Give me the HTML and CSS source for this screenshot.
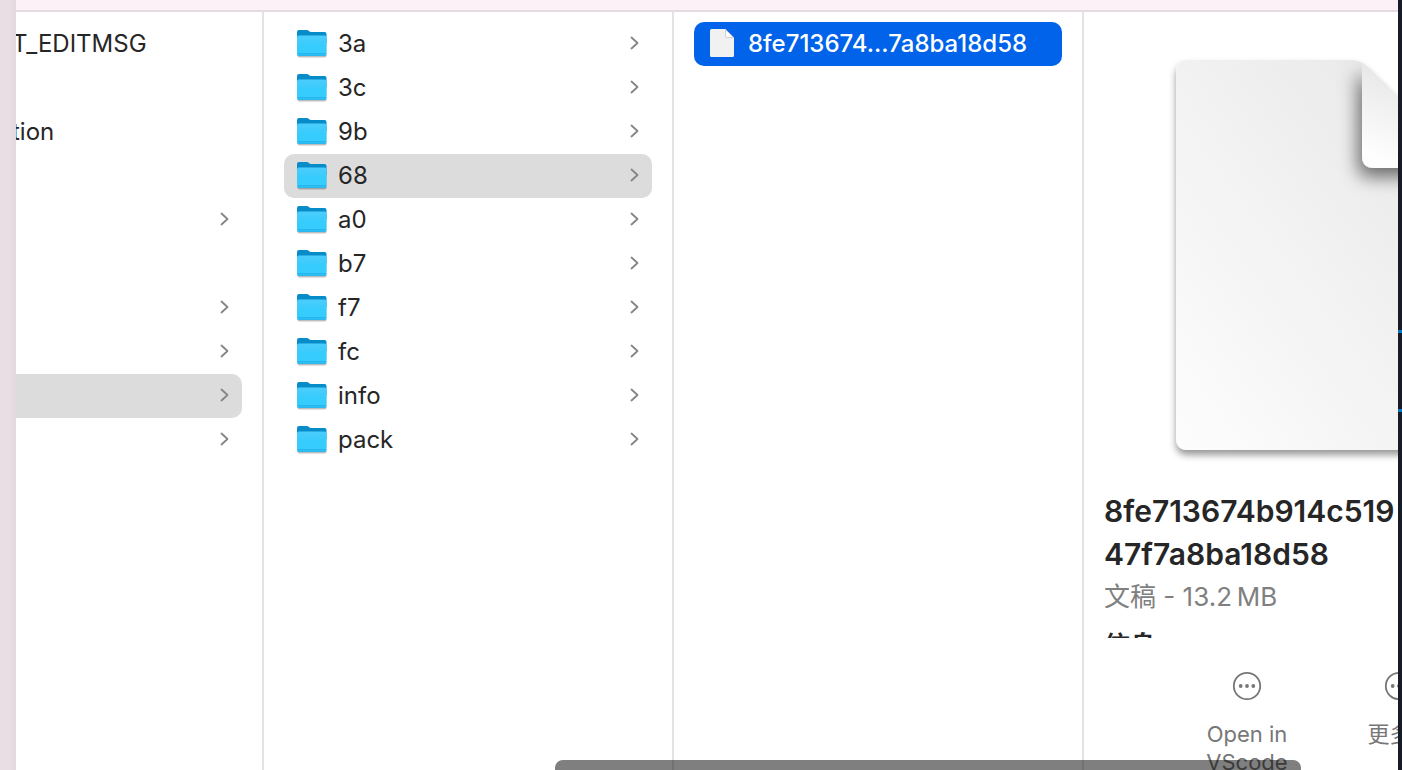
FILE: index.html
```
<!DOCTYPE html>
<html lang="zh-CN">
<head>
<meta charset="utf-8">
<title>objects</title>
<link rel="stylesheet" href="styles.css">
</head>
<body>
<svg class="defs" aria-hidden="true">
  <defs>
    <linearGradient id="folder-front" x1="0" y1="0" x2="0" y2="1">
      <stop offset="0" stop-color="#4ccdfb"/><stop offset="0.5" stop-color="#36ccfe"/><stop offset="0.85" stop-color="#36ccfe"/><stop offset="1" stop-color="#25b4ea"/>
    </linearGradient>
    <linearGradient id="sheet" x1="1" y1="0" x2="0" y2="1">
      <stop offset="0" stop-color="#e6e6e6"/><stop offset="1" stop-color="#fdfdfd"/>
    </linearGradient>
    <linearGradient id="flap" x1="0.7" y1="0.2" x2="0.4" y2="1">
      <stop offset="0" stop-color="#e6e6e6"/><stop offset="1" stop-color="#fefefe"/>
    </linearGradient>
    <symbol id="folder" viewBox="0 -1 32 30">
      <rect x="1.5" y="8" width="29" height="20.500" rx="2" fill="#000" opacity="0.25"/>
      <path d="M1 3Q1 1 3 1H10.500Q12 1 13 2L14.200 3H28.500Q30.500 3 30.500 5V14H1Z" fill="#078cc9"/>
      <path d="M1 8.500Q1 6.500 3 6.500H28.500Q30.500 6.500 30.500 8.500V25Q30.500 27 28.500 27H3Q1 27 1 25Z" fill="url(#folder-front)"/>
      <path d="M2 24.500H29.500" stroke="#24b7ee"/>
    </symbol>
    <symbol id="chevron" viewBox="0 0 10 14">
      <path d="M1.500 1.500L7.500 7L1.500 12.500" fill="none" stroke="#858585" stroke-width="1.800" stroke-linecap="round" stroke-linejoin="round"/>
    </symbol>
    <symbol id="more" viewBox="0 0 30 30">
      <circle cx="15" cy="15" r="13.200" fill="none" stroke="#777" stroke-width="1.800"/>
      <circle cx="8.700" cy="15" r="1.900" fill="#777"/><circle cx="15" cy="15" r="1.900" fill="#777"/><circle cx="21.300" cy="15" r="1.900" fill="#777"/>
    </symbol>
  </defs>
</svg>
<div class="window">
  <aside class="sidebar-edge"></aside>
  <div class="browser">
    <header class="toolbar-edge"></header>
    <main class="columns">
      <ul class="column parent">
        <li><button class="row">T_EDITMSG</button></li>
        <li class="blank"></li>
        <li><button class="row">tion</button></li>
        <li class="blank"></li>
        <li><button class="row" aria-label="hooks"><svg class="chevron"><use href="#chevron"/></svg></button></li>
        <li class="blank"></li>
        <li><button class="row" aria-label="info"><svg class="chevron"><use href="#chevron"/></svg></button></li>
        <li><button class="row" aria-label="logs"><svg class="chevron"><use href="#chevron"/></svg></button></li>
        <li><button class="row open" aria-label="objects"><svg class="chevron"><use href="#chevron"/></svg></button></li>
        <li><button class="row" aria-label="refs"><svg class="chevron"><use href="#chevron"/></svg></button></li>
      </ul>
      <ul class="column">
        <li><button class="row"><svg class="icon"><use href="#folder"/></svg>3a<svg class="chevron"><use href="#chevron"/></svg></button></li>
        <li><button class="row"><svg class="icon"><use href="#folder"/></svg>3c<svg class="chevron"><use href="#chevron"/></svg></button></li>
        <li><button class="row"><svg class="icon"><use href="#folder"/></svg>9b<svg class="chevron"><use href="#chevron"/></svg></button></li>
        <li><button class="row open"><svg class="icon"><use href="#folder"/></svg>68<svg class="chevron"><use href="#chevron"/></svg></button></li>
        <li><button class="row"><svg class="icon"><use href="#folder"/></svg>a0<svg class="chevron"><use href="#chevron"/></svg></button></li>
        <li><button class="row"><svg class="icon"><use href="#folder"/></svg>b7<svg class="chevron"><use href="#chevron"/></svg></button></li>
        <li><button class="row"><svg class="icon"><use href="#folder"/></svg>f7<svg class="chevron"><use href="#chevron"/></svg></button></li>
        <li><button class="row"><svg class="icon"><use href="#folder"/></svg>fc<svg class="chevron"><use href="#chevron"/></svg></button></li>
        <li><button class="row"><svg class="icon"><use href="#folder"/></svg>info<svg class="chevron"><use href="#chevron"/></svg></button></li>
        <li><button class="row"><svg class="icon"><use href="#folder"/></svg>pack<svg class="chevron"><use href="#chevron"/></svg></button></li>
      </ul>
      <ul class="column">
        <li><button class="row selected"><svg class="icon" viewBox="0 -1 32 30">
          <path d="M5 0H19.500L28 8.500V26.500Q28 28 26.500 28H5.500Q4 28 4 26.500V1.500Q4 0 5.500 0Z" fill="#f1f1f1"/>
          <path d="M19.500 0.500V7Q19.500 8.500 21 8.500H27.500Z" fill="#fff" stroke="#c4c4c4" stroke-width="0.800"/>
        </svg>8fe713674...7a8ba18d58</button></li>
      </ul>
      <section class="preview">
        <div class="details">
          <svg class="document" viewBox="0 0 340 430" aria-hidden="true">
            <defs>
              <filter id="sheet-shadow" x="-10%" y="-10%" width="120%" height="120%"><feDropShadow dx="0" dy="5" stdDeviation="3.500" flood-opacity="0.400"/></filter>
              <filter id="flap-shadow" x="-50%" y="-50%" width="200%" height="200%"><feDropShadow dx="-4" dy="9" stdDeviation="9" flood-opacity="0.550"/></filter>
              <clipPath id="sheet-clip"><path d="M32 20H196Q204 20 211 26L314 129V410H20V32Q20 20 32 20Z"/></clipPath>
            </defs>
            <path d="M32 20H196Q204 20 211 26L314 129V398Q314 410 302 410H32Q20 410 20 398V32Q20 20 32 20Z" fill="url(#sheet)" filter="url(#sheet-shadow)"/>
            <g clip-path="url(#sheet-clip)">
              <path d="M206 22V116Q206 128 218 128H314Z" fill="url(#flap)" filter="url(#flap-shadow)"/>
            </g>
          </svg>
          <h1 class="name">8fe713674b914c519<br>47f7a8ba18d58</h1>
          <p class="kind">文稿 - 13.2&#8201;MB</p>
          <h2 class="info">信息</h2>
        </div>
        <div class="actions">
          <button class="action"><svg class="more"><use href="#more"/></svg>Open in VScode</button>
          <button class="action"><svg class="more"><use href="#more"/></svg>更多…</button>
        </div>
      </section>
    </main>
    <div class="scrollbar"></div>
  </div>
  <aside class="backdrop"><i></i><i></i></aside>
</div>
</body>
</html>
```
FILE: styles.css
```
* { box-sizing: border-box; }
body {
  margin: 0;
  background: #fff;
  color: #262626;
  font-family: Inter, "Noto Sans CJK SC", sans-serif;
  font-size: 24px;
}
button { border: 0; background: none; color: inherit; font: inherit; }
ul, h1, h2, p { margin: 0; padding: 0; }
.defs { position: absolute; width: 0; height: 0; }

.window { display: flex; height: 100vh; overflow: hidden; }
.sidebar-edge {
  flex: none;
  width: 16px;
  background: linear-gradient(to right, #e9dee4 50%, #e3d8de);
}
.browser {
  position: relative;
  display: flex;
  flex: 1;
  flex-direction: column;
  min-width: 0;
}
.toolbar-edge {
  flex: none;
  height: 12px;
  border-bottom: 2px solid #e4dae0;
  background: #fbf1f7;
}
.columns {
  display: grid;
  flex: 1;
  grid-template: minmax(0, 1fr) / minmax(0, 248fr) minmax(0, 410fr) minmax(0, 410fr) minmax(0, 314fr);
  min-height: 0;
}
.column {
  padding: 10px 20px;
  border-right: 2px solid #e4e3e4;
  overflow: hidden;
  list-style: none;
}
.parent { padding-left: 0; text-indent: -4px; }
.blank { height: 44px; }
.row {
  display: flex;
  align-items: center;
  gap: 10px;
  width: 100%;
  height: 44px;
  padding: 0 12px 2px;
  border-radius: 10px;
  text-align: left;
  text-indent: inherit;
  white-space: nowrap;
}
.parent .row { padding-left: 0; }
.parent .open { border-radius: 0 10px 10px 0; }
.open { background: #dcdcdc; }
.selected { background: #0063e9; color: #fff; font-weight: 500; }
.icon { flex: none; width: 32px; height: 30px; }
.chevron { flex: none; width: 10px; height: 14px; margin-left: auto; }

.preview {
  display: flex;
  flex-direction: column;
  overflow: hidden;
}
.details {
  flex: 1;
  min-height: 0;
  padding: 28px 0 0 20px;
  overflow: hidden;
  white-space: nowrap;
}
.document {
  display: block;
  width: 340px;
  height: 430px;
  margin: 0 0 20px 52px;
}
.name { font-size: 30px; font-weight: 600; line-height: 43px; }
.kind { color: #808080; font-size: 26px; line-height: 42px; }
.info { font-size: 26px; font-weight: 700; line-height: 56px; }
.actions {
  display: flex;
  flex: none;
  gap: 40px;
  height: 132px;
  padding: 33px 0 0 107px;
}
.action {
  display: flex;
  flex: none;
  flex-direction: column;
  align-items: center;
  gap: 19px;
  width: 112px;
  padding: 0;
  color: #777;
  font-size: 22px;
  line-height: 28px;
}
.more { flex: none; width: 30px; height: 30px; }
.scrollbar {
  position: absolute;
  bottom: 0;
  left: 39%;
  width: 54%;
  height: 10px;
  border-radius: 8px 8px 0 0;
  background: rgb(0 0 0 / 50%);
}
.backdrop {
  display: flex;
  flex: none;
  flex-direction: column;
  gap: 76px;
  width: 4px;
  padding-top: 330px;
  background: #171b26;
}
.backdrop i { height: 3px; background: #0878c8; }
```
